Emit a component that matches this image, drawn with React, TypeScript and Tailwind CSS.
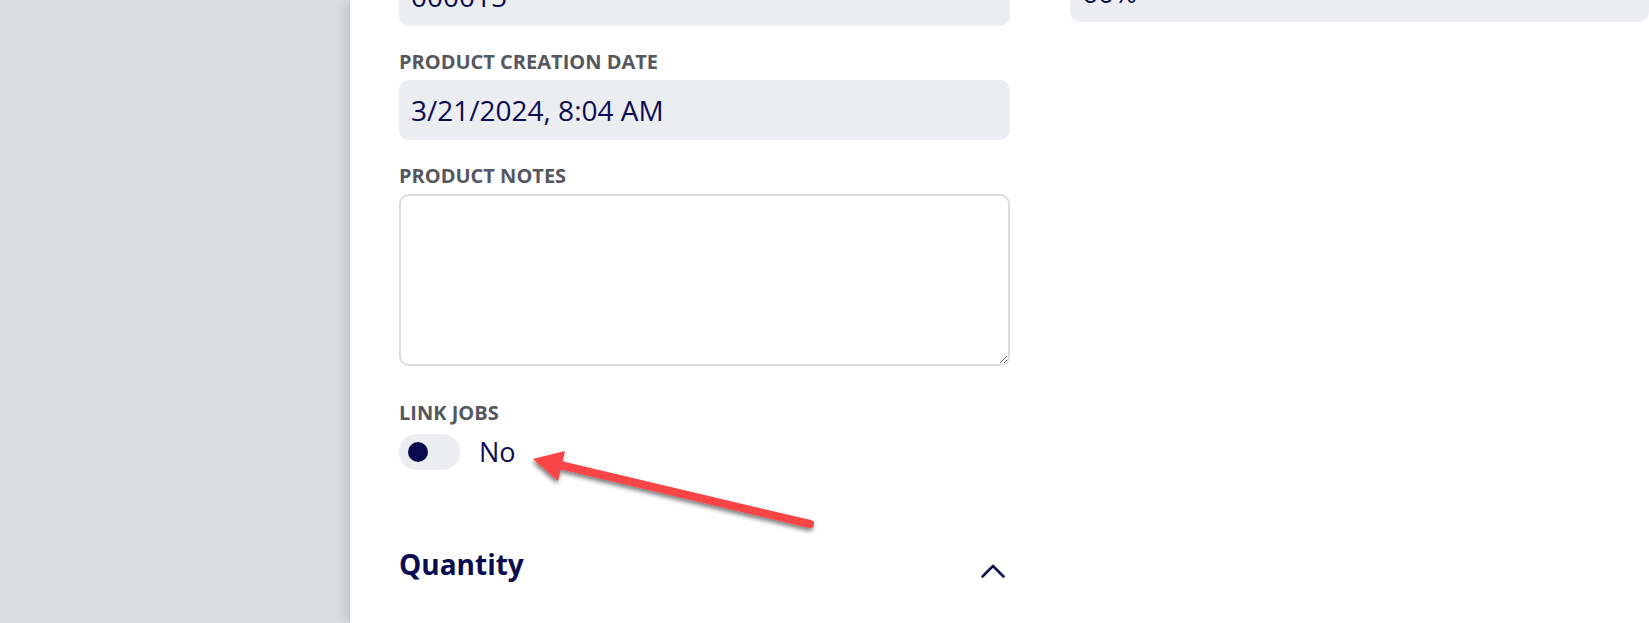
import { useState } from 'react';

const font = { fontFamily: '"Open Sans", "Noto Sans", sans-serif' };

function FieldLabel({ children }: { children: string }) {
  return (
    <div className="mb-[6px] text-[20px] font-bold uppercase leading-[24px] text-[#55575f]">
      {children}
    </div>
  );
}

function ReadOnlyBox({ value }: { value: string }) {
  return (
    <div className="flex h-[60px] items-center rounded-[10px] bg-[#ecedf1] px-3 text-[28px] text-[#0c0c52]">
      {value}
    </div>
  );
}

function Toggle({ on, onChange }: { on: boolean; onChange: (v: boolean) => void }) {
  return (
    <button
      onClick={() => onChange(!on)}
      className="flex h-[36px] w-[61px] items-center rounded-full bg-[#ecedf1] px-[9px]"
    >
      <span className={`h-[20px] w-[20px] rounded-full bg-[#0a0a4c] ${on ? 'ml-auto' : ''}`} />
    </button>
  );
}

export default function App() {
  const [linkJobs, setLinkJobs] = useState(false);

  return (
    <div className="relative flex h-[623px] w-full overflow-hidden bg-white" style={font}>
      {/* Sidebar */}
      <div className="w-[350px] shrink-0 bg-[#dcdde2]" />

      {/* Main panel */}
      <div className="relative flex flex-1 gap-[60px] pl-[49px] shadow-[-5px_0_10px_rgba(0,0,0,0.10)]">
        {/* Left column */}
        <div className="flex w-[611px] shrink-0 flex-col">
          <div className="mt-[-34px]">
            <ReadOnlyBox value="000015" />
          </div>

          <div className="mt-[24px]">
            <FieldLabel>Product Creation Date</FieldLabel>
            <ReadOnlyBox value="3/21/2024, 8:04 AM" />
          </div>

          <div className="mt-[24px]">
            <FieldLabel>Product Notes</FieldLabel>
            <textarea className="block h-[172px] w-full resize-y rounded-[10px] border-2 border-[#dcdde3] bg-white px-3 py-2 text-[20px] text-[#0c0c52] outline-none" />
          </div>

          <div className="mt-[35px]">
            <div className="mb-[9px] text-[20px] font-bold uppercase leading-[24px] text-[#55575f]">
              Link Jobs
            </div>
            <div className="flex items-center gap-[19px]">
              <Toggle on={linkJobs} onChange={setLinkJobs} />
              <span className="text-[27px] leading-[36px] text-[#0c0c52]">{linkJobs ? 'Yes' : 'No'}</span>
            </div>
          </div>

          <div className="mt-[75px] flex items-start justify-between">
            <h2 className="text-[28px] font-bold leading-[38px] text-[#0b0b50]">Quantity</h2>
            <svg className="mr-[4px] mt-[18px]" width="26" height="16" viewBox="0 0 26 16" fill="none">
              <polyline
                points="2.5,13.5 13,3 23.5,13.5"
                stroke="#0b0b50"
                strokeWidth="2.6"
                strokeLinecap="round"
                strokeLinejoin="round"
              />
            </svg>
          </div>
        </div>

        {/* Right column */}
        <div className="flex w-[579px] shrink-0 flex-col">
          <div className="mt-[-38px]">
            <ReadOnlyBox value="60%" />
          </div>
        </div>
      </div>

      {/* Annotation arrow */}
      <svg className="pointer-events-none absolute left-0 top-0" width="1649" height="623">
        <defs>
          <filter id="arrowShadow" x="-20%" y="-50%" width="140%" height="200%">
            <feDropShadow dx="-1" dy="3" stdDeviation="2" floodColor="#000" floodOpacity="0.5" />
          </filter>
        </defs>
        <g filter="url(#arrowShadow)">
          <line x1="810" y1="524" x2="556" y2="464" stroke="#f94545" strokeWidth="8" strokeLinecap="round" />
          <polygon points="533,459 565,451 558,481" fill="#f94545" />
        </g>
      </svg>
    </div>
  );
}
